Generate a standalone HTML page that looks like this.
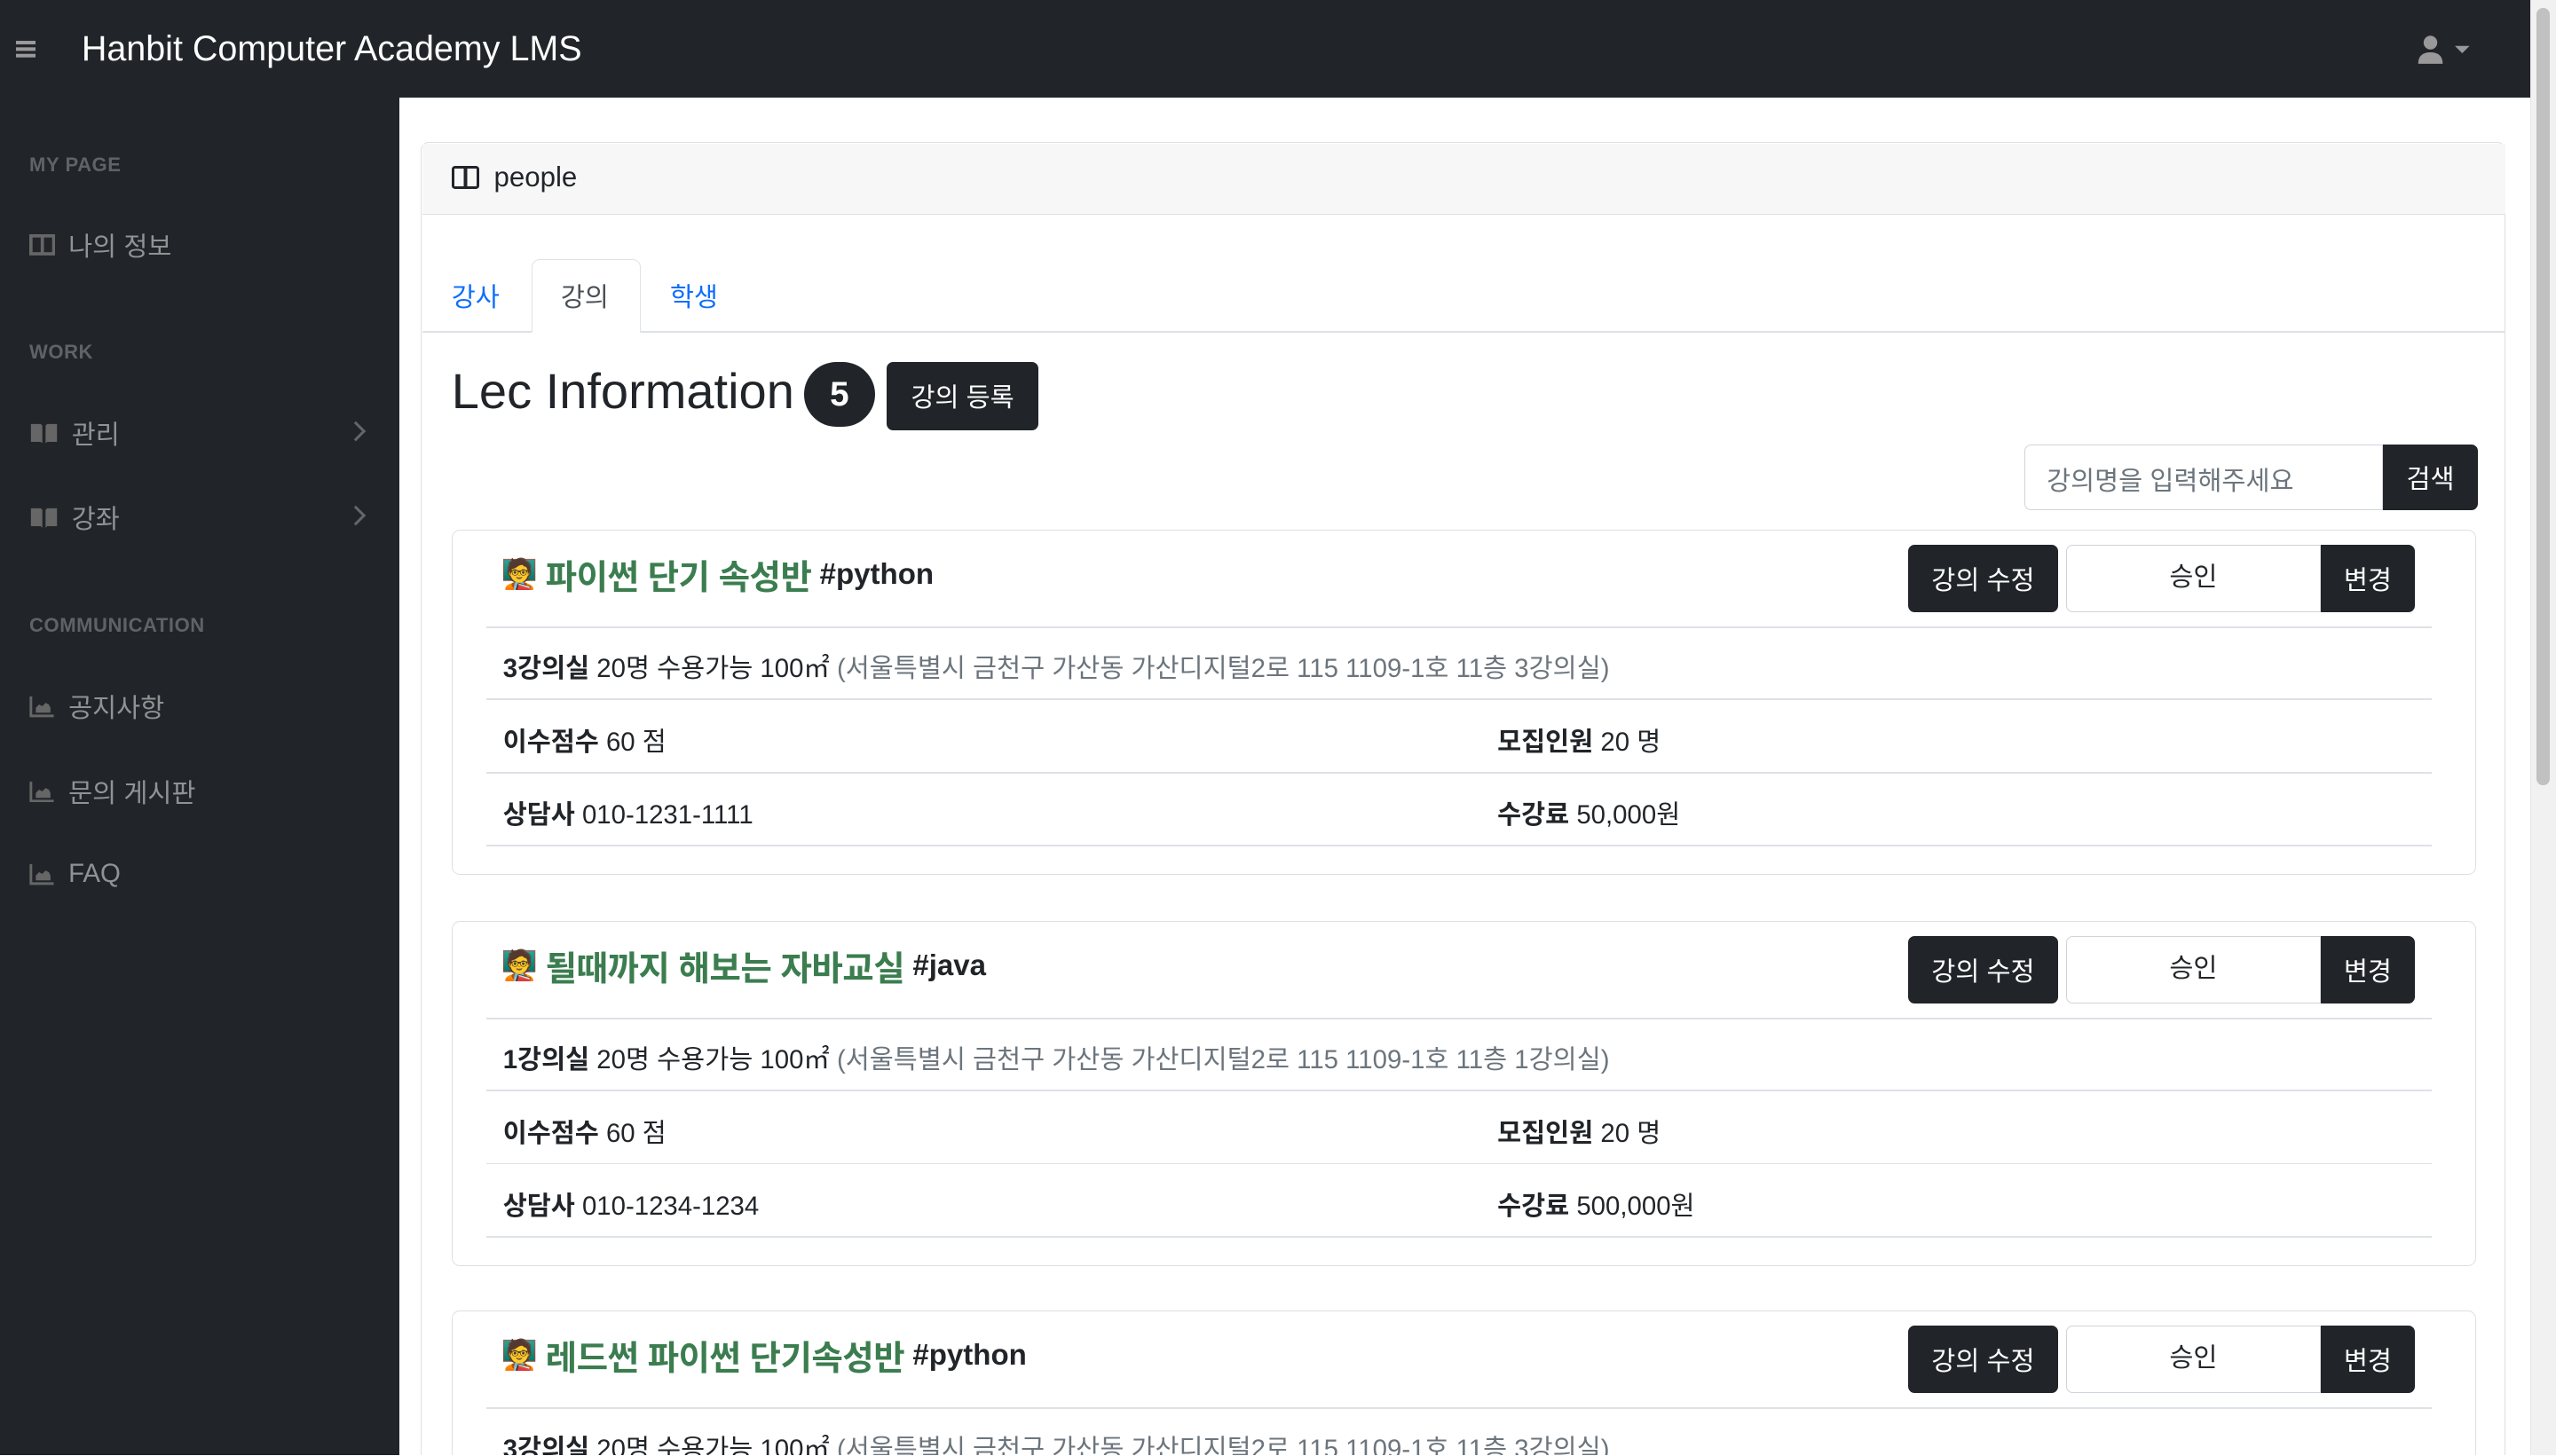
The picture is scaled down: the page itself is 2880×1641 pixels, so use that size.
<!DOCTYPE html>
<html><head><meta charset="utf-8"><style>
html{zoom:1.83673;overflow:hidden;height:893px}
body{margin:0;width:1568px;height:893px;overflow:hidden;position:relative;font-family:"Liberation Sans","Noto Sans CJK KR",sans-serif;color:#212529;background:#fff}
#w{position:absolute;left:0;top:0;width:1568px;height:893px;overflow:hidden}
.a{position:absolute}
.top{left:0;top:0;width:1552px;height:60px;background:#212529}
.side{left:0;top:60px;width:245px;height:833px;background:#212529}
.lab{font-size:12px;font-weight:bold;color:#5f6368;letter-spacing:.3px}
.it{font-size:16px;color:rgba(255,255,255,.5);display:flex;align-items:center;gap:8px}
.btn{background:#212529;color:#fff;border-radius:4px;font-size:16px;display:flex;align-items:center;justify-content:center}
.card{border:1px solid #dfdfdf;border-radius:5px;left:277px;width:1241px;height:211px}
.hr{height:1px;background:#dee2e6;left:21px;width:1193px}
.row{font-size:16px;left:31px}
.t{font-size:21px;font-weight:bold;color:#3b7d4f;left:30px;top:12px;display:flex;align-items:center;gap:5px;letter-spacing:-0.3px}
.t b{color:#212529;font-size:18px;letter-spacing:0}
.em{font-size:18px}
</style></head><body><div id="w">
<div class="a top"></div>
<div class="a" style="left:10px;top:25px;width:12px;height:2px;background:#9a9a9a;box-shadow:0 4px #9a9a9a,0 8px #9a9a9a"></div>
<div class="a" style="left:50px;top:18px;font-size:21.5px;color:#fff">Hanbit Computer Academy LMS</div>
<svg class="a" style="left:1482px;top:20px" width="36" height="20" viewBox="0 0 36 20"><circle cx="9" cy="6" r="4.2" fill="#999"/><path d="M1.5 19c0-5 3-7 7.5-7s7.5 2 7.5 7z" fill="#999"/><path d="M24 8h9l-4.5 4.5z" fill="#999"/></svg>
<div class="a side"></div>
<div class="a lab" style="left:18px;top:94px">MY PAGE</div>
<div class="a it" style="left:18px;top:139px"><svg width="16" height="13" viewBox="0 0 16 13"><rect x="1" y="1" width="14" height="11" fill="none" stroke="#666" stroke-width="2"/><rect x="7" y="1" width="2" height="11" fill="#666"/></svg>나의 정보</div>
<div class="a lab" style="left:18px;top:209px">WORK</div>
<div class="a it" style="left:18px;top:254px"><svg width="18" height="13" viewBox="0 0 18 13"><path d="M1 1h6l1 1v11l-1-1H1zM17 1h-6l-1 1v11l1-1h6z" fill="#666"/></svg>관리</div>
<div class="a" style="left:214px;top:260px;width:7px;height:7px;border-right:2px solid #666;border-top:2px solid #666;transform:rotate(45deg)"></div>
<div class="a it" style="left:18px;top:306px"><svg width="18" height="13" viewBox="0 0 18 13"><path d="M1 1h6l1 1v11l-1-1H1zM17 1h-6l-1 1v11l1-1h6z" fill="#666"/></svg>강좌</div>
<div class="a" style="left:214px;top:312px;width:7px;height:7px;border-right:2px solid #666;border-top:2px solid #666;transform:rotate(45deg)"></div>
<div class="a lab" style="left:18px;top:377px">COMMUNICATION</div>
<div class="a it" style="left:18px;top:422px"><svg width="16" height="14" viewBox="0 0 16 14"><path d="M1 1v12h14" fill="none" stroke="#666" stroke-width="1.6"/><path d="M4 11V8l2-2 2 1 2-2 2 1 1 2v3z" fill="#666"/></svg>공지사항</div>
<div class="a it" style="left:18px;top:474px"><svg width="16" height="14" viewBox="0 0 16 14"><path d="M1 1v12h14" fill="none" stroke="#666" stroke-width="1.6"/><path d="M4 11V8l2-2 2 1 2-2 2 1 1 2v3z" fill="#666"/></svg>문의 게시판</div>
<div class="a it" style="left:18px;top:527px"><svg width="16" height="14" viewBox="0 0 16 14"><path d="M1 1v12h14" fill="none" stroke="#666" stroke-width="1.6"/><path d="M4 11V8l2-2 2 1 2-2 2 1 1 2v3z" fill="#666"/></svg>FAQ</div>
<div class="a" style="left:1552px;top:0;width:16px;height:893px;background:#f1f1f1;border-left:1px solid #e5e5e5;box-sizing:border-box"></div>
<div class="a" style="left:1556px;top:5px;width:8px;height:477px;background:#c1c1c1;border-radius:4px"></div>
<div class="a" style="left:258px;top:87px;width:1279px;height:810px;border:1px solid #dfdfdf;border-radius:5px;box-sizing:border-box"></div>
<div class="a" style="left:259px;top:88px;width:1278px;height:43px;background:#f7f7f7;border-bottom:1px solid #dfdfdf"></div>
<div class="a" style="left:277px;top:102px;width:17px;height:14px;border:2px solid #212529;border-radius:2px;box-sizing:border-box;background:linear-gradient(90deg,transparent 42%,#212529 42%,#212529 58%,transparent 58%)"></div>
<div class="a" style="left:303px;top:99px;font-size:17px">people</div>
<div class="a" style="left:259px;top:203px;width:1278px;height:1px;background:#dee2e6"></div>
<div class="a" style="left:277px;top:170px;font-size:16px;color:#0d6efd">강사</div>
<div class="a" style="left:326px;top:159px;width:67px;height:45px;border:1px solid #dee2e6;border-bottom:1px solid #fff;border-radius:5px 5px 0 0;background:#fff;box-sizing:border-box"></div>
<div class="a" style="left:344px;top:170px;font-size:16px;color:#495057">강의</div>
<div class="a" style="left:411px;top:170px;font-size:16px;color:#0d6efd">학생</div>
<div class="a" style="left:277px;top:222px;font-size:30.5px;font-weight:500">Lec Information</div>
<div class="a" style="left:493px;top:222px;width:44px;height:40px;border-radius:20px;background:#212529;color:#fff;font-size:21px;font-weight:bold;text-align:center;line-height:40px">5</div>
<div class="a btn" style="left:544px;top:222px;width:93px;height:42px">강의 등록</div>
<div class="a" style="left:1242px;top:273px;width:220px;height:40px;border:1px solid #ced4da;border-radius:4px 0 0 4px;box-sizing:border-box;font-size:16px;color:#6c757d;padding:9px 13px">강의명을 입력해주세요</div>
<div class="a btn" style="left:1462px;top:273px;width:58px;height:40px;border-radius:0 4px 4px 0">검색</div>

<div class="a card" style="top:325px">
<div class="a t"><span class="em">🧑‍🏫</span>파이썬 단기 속성반 <b>#python</b></div>
<div class="a btn" style="left:893px;top:9px;width:92px;height:41px">강의 수정</div>
<div class="a" style="left:990px;top:9px;width:156px;height:41px;border:1px solid #ced4da;border-radius:4px 0 0 4px;box-sizing:border-box;text-align:center;line-height:39px;font-size:16px">승인</div>
<div class="a btn" style="left:1146px;top:9px;width:58px;height:41px;border-radius:0 4px 4px 0">변경</div>
<div class="a hr" style="top:59px"></div>
<div class="a row" style="top:72px"><b>3강의실</b> 20명 수용가능 100㎡ <span style="color:#6c757d">(서울특별시 금천구 가산동 가산디지털2로 115 1109-1호 11층 3강의실)</span></div>
<div class="a hr" style="top:103px"></div>
<div class="a row" style="top:117px"><b>이수점수</b> 60 점</div><div class="a row" style="left:641px;top:117px"><b>모집인원</b> 20 명</div>
<div class="a hr" style="top:148px"></div>
<div class="a row" style="top:162px"><b>상담사</b> 010-1231-1111</div><div class="a row" style="left:641px;top:162px"><b>수강료</b> 50,000원</div>
<div class="a hr" style="top:193px"></div>
</div>

<div class="a card" style="top:565px">
<div class="a t"><span class="em">🧑‍🏫</span>될때까지 해보는 자바교실 <b>#java</b></div>
<div class="a btn" style="left:893px;top:9px;width:92px;height:41px">강의 수정</div>
<div class="a" style="left:990px;top:9px;width:156px;height:41px;border:1px solid #ced4da;border-radius:4px 0 0 4px;box-sizing:border-box;text-align:center;line-height:39px;font-size:16px">승인</div>
<div class="a btn" style="left:1146px;top:9px;width:58px;height:41px;border-radius:0 4px 4px 0">변경</div>
<div class="a hr" style="top:59px"></div>
<div class="a row" style="top:72px"><b>1강의실</b> 20명 수용가능 100㎡ <span style="color:#6c757d">(서울특별시 금천구 가산동 가산디지털2로 115 1109-1호 11층 1강의실)</span></div>
<div class="a hr" style="top:103px"></div>
<div class="a row" style="top:117px"><b>이수점수</b> 60 점</div><div class="a row" style="left:641px;top:117px"><b>모집인원</b> 20 명</div>
<div class="a hr" style="top:148px"></div>
<div class="a row" style="top:162px"><b>상담사</b> 010-1234-1234</div><div class="a row" style="left:641px;top:162px"><b>수강료</b> 500,000원</div>
<div class="a hr" style="top:193px"></div>
</div>

<div class="a card" style="top:804px;height:95px">
<div class="a t"><span class="em">🧑‍🏫</span>레드썬 파이썬 단기속성반 <b>#python</b></div>
<div class="a btn" style="left:893px;top:9px;width:92px;height:41px">강의 수정</div>
<div class="a" style="left:990px;top:9px;width:156px;height:41px;border:1px solid #ced4da;border-radius:4px 0 0 4px;box-sizing:border-box;text-align:center;line-height:39px;font-size:16px">승인</div>
<div class="a btn" style="left:1146px;top:9px;width:58px;height:41px;border-radius:0 4px 4px 0">변경</div>
<div class="a hr" style="top:59px"></div>
<div class="a row" style="top:72px"><b>3강의실</b> 20명 수용가능 100㎡ <span style="color:#6c757d">(서울특별시 금천구 가산동 가산디지털2로 115 1109-1호 11층 3강의실)</span></div>
</div>
</div></body></html>
